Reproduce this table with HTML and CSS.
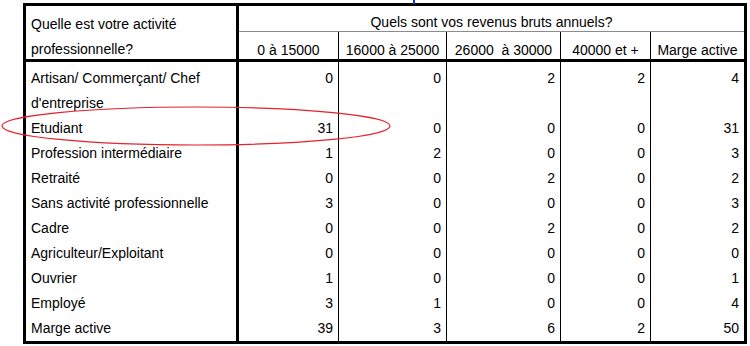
FILE: index.html
```html
<!DOCTYPE html>
<html lang="fr">
<head>
<meta charset="utf-8">
<title>Activité professionnelle / revenus</title>
<link rel="stylesheet" href="styles.css">
</head>
<body>
<div class="page">
  <span class="cursor-mark"></span>
  <div class="crosstab">
    <div class="corner">Quelle est votre activité professionnelle?</div>
    <div class="title">Quels sont vos revenus bruts annuels?</div>
    <div class="colhead">0 à 15000</div>
    <div class="colhead">16000 à 25000</div>
    <div class="colhead">26000&nbsp; à 30000</div>
    <div class="colhead">40000 et +</div>
    <div class="colhead last">Marge active</div>

    <div class="label first">Artisan/ Commerçant/ Chef d'entreprise</div>
    <div class="num first">0</div><div class="num first">0</div><div class="num first">2</div><div class="num first">2</div><div class="num first last">4</div>

    <div class="label">Etudiant</div>
    <div class="num">31</div><div class="num">0</div><div class="num">0</div><div class="num">0</div><div class="num last">31</div>

    <div class="label">Profession intermédiaire</div>
    <div class="num">1</div><div class="num">2</div><div class="num">0</div><div class="num">0</div><div class="num last">3</div>

    <div class="label">Retraité</div>
    <div class="num">0</div><div class="num">0</div><div class="num">2</div><div class="num">0</div><div class="num last">2</div>

    <div class="label">Sans activité professionnelle</div>
    <div class="num">3</div><div class="num">0</div><div class="num">0</div><div class="num">0</div><div class="num last">3</div>

    <div class="label">Cadre</div>
    <div class="num">0</div><div class="num">0</div><div class="num">2</div><div class="num">0</div><div class="num last">2</div>

    <div class="label">Agriculteur/Exploitant</div>
    <div class="num">0</div><div class="num">0</div><div class="num">0</div><div class="num">0</div><div class="num last">0</div>

    <div class="label">Ouvrier</div>
    <div class="num">1</div><div class="num">0</div><div class="num">0</div><div class="num">0</div><div class="num last">1</div>

    <div class="label">Employé</div>
    <div class="num">3</div><div class="num">1</div><div class="num">0</div><div class="num">0</div><div class="num last">4</div>

    <div class="label">Marge active</div>
    <div class="num">39</div><div class="num">3</div><div class="num">6</div><div class="num">2</div><div class="num last">50</div>
  </div>
  <svg class="highlight" width="400" height="60" viewBox="0 100 400 60" aria-hidden="true">
    <ellipse cx="196" cy="126" rx="194" ry="19" fill="none" stroke="#e8202a" stroke-width="1.2"/>
  </svg>
</div>
</body>
</html>
```
FILE: styles.css
```css
html, body {
  margin: 0;
  padding: 0;
  background: #ffffff;
}

.page {
  position: relative;
  width: 750px;
  height: 346px;
  overflow: hidden;
  padding-top: 3px;
  box-sizing: border-box;
}

.crosstab {
  margin-left: 23px;
  width: 718px;
  border: 3px solid #000;
  display: grid;
  grid-template-columns: 213px 100px 108px 114px 90px 93px;
  grid-template-rows: 26px 30px 54px repeat(9, 25px);
  font-family: "Liberation Sans", Arial, sans-serif;
  font-size: 14px;
  color: #000;
}

.crosstab > div {
  box-sizing: border-box;
  white-space: nowrap;
}

.corner {
  grid-row: 1 / 3;
  grid-column: 1;
  border-right: 3px solid #000;
  border-bottom: 3px solid #000;
  white-space: normal !important;
  line-height: 25px;
  padding: 6px 8px 0 5px;
  overflow: visible;
}

.title {
  grid-row: 1;
  grid-column: 2 / 7;
  border-bottom: 1px solid #8c8c8c;
  display: flex;
  align-items: flex-end;
  justify-content: center;
  line-height: 17px;
}

.colhead {
  border-bottom: 3px solid #000;
  border-right: 1px solid #000;
  display: flex;
  align-items: flex-end;
  justify-content: center;
  line-height: 17px;
}

.label {
  border-right: 3px solid #000;
  padding-left: 5px;
  line-height: 25px;
}

.label.first {
  white-space: normal !important;
  padding-top: 4px;
  padding-right: 10px;
}

.num {
  border-right: 1px solid #000;
  text-align: right;
  padding-right: 5px;
  line-height: 25px;
}

.num.first {
  padding-top: 4px;
}

.crosstab > .last {
  border-right: none;
}

.highlight {
  position: absolute;
  left: 0;
  top: 100px;
  pointer-events: none;
}

.cursor-mark {
  position: absolute;
  left: 413px;
  top: 0;
  width: 2px;
  height: 4px;
  background: #1a33cc;
}
```
